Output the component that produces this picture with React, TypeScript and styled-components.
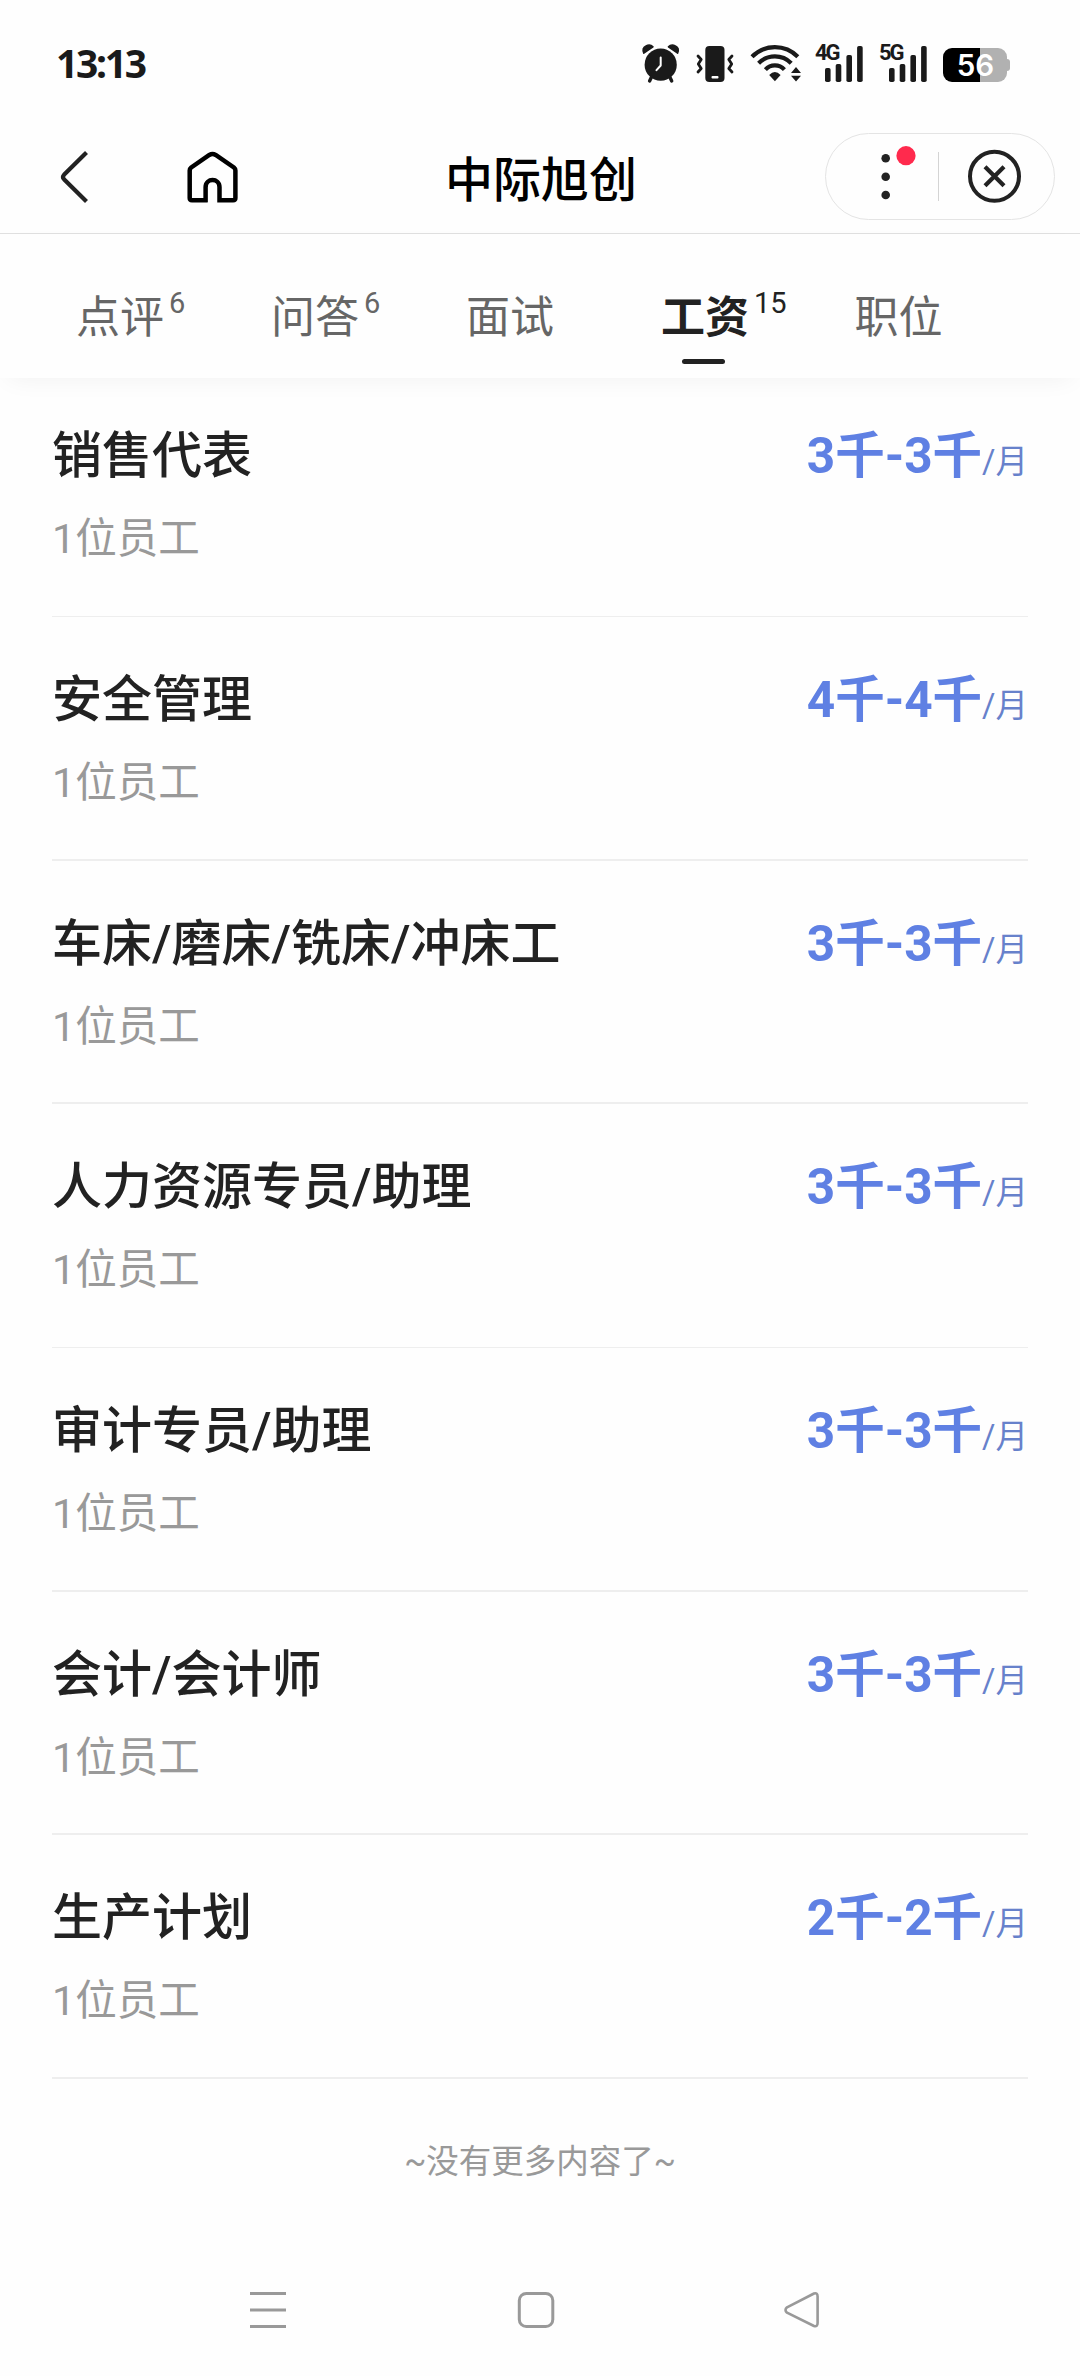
import React from 'react';
import styled, { createGlobalStyle } from 'styled-components';

const GlobalStyle = createGlobalStyle`
  * { box-sizing: border-box; }
  body {
    margin: 0;
    background: #fefefe;
    font-family: Roboto, "Noto Sans CJK SC", sans-serif;
  }
`;

const Screen = styled.div`
  width: 1080px;
  height: 2376px;
  display: flex;
  flex-direction: column;
  background: #fefefe;
  color: #222;
  overflow: hidden;
`;

const StatusBar = styled.header`
  height: 120px;
  flex: none;
  display: flex;
  justify-content: space-between;
  padding: 40px 70px 0 56px;
`;

const Clock = styled.time`
  font: 700 39px/46px "Noto Sans", sans-serif;
  letter-spacing: -2.3px;
  color: #1a1a1a;
`;

const StatusIcons = styled.div`
  display: flex;
  gap: 16px;
  height: 46px;
`;

const Signal = styled.div`
  position: relative;
  width: 48px;
  height: 46px;
`;

const Network = styled.span`
  position: absolute;
  left: 0;
  top: 1px;
  font: 700 22px/24px Roboto, sans-serif;
  letter-spacing: -2px;
  color: #1a1a1a;
`;

const Battery = styled.div`
  display: flex;
  align-items: center;
  height: 34px;
  margin-top: 8px;
`;

const Charge = styled.div<{ $level: number }>`
  width: 64px;
  height: 34px;
  padding-left: 1px;
  border-radius: 9px;
  background: linear-gradient(90deg, #000 ${(p) => p.$level}%, #b1b1b1 ${(p) => p.$level}%);
  color: #fff;
  text-align: center;
  font: 600 29.5px/35px Inter, sans-serif;
`;

const Nub = styled.i`
  width: 3px;
  height: 12px;
  border-radius: 0 3px 3px 0;
  background: #b1b1b1;
`;

const NavBar = styled.nav`
  height: 114px;
  flex: none;
  display: grid;
  grid-template-columns: 256px 1fr 255px;
  align-items: center;
  border-bottom: 1px solid #e0e0e0;
  padding-right: 25px;
`;

const NavActions = styled.div`
  display: flex;
  align-items: center;
  gap: 95px;
  padding-left: 58px;
`;

const PageTitle = styled.h1`
  margin: 8px 0 0 26px;
  text-align: center;
  font-size: 48px;
  line-height: 60px;
  font-weight: 500;
  color: #000;
`;

const Capsule = styled.div`
  width: 230px;
  height: 87px;
  margin-left: 25px;
  border: 1px solid #e4e4e4;
  border-radius: 44px;
  display: flex;
  align-items: center;
`;

const Divider = styled.i`
  width: 1px;
  height: 49px;
  background: #d4d4d4;
`;

const Tabs = styled.div`
  height: 144px;
  flex: none;
  display: flex;
  padding: 36px 0 0 76px;
  box-shadow: 0 8px 24px -8px rgba(0, 0, 0, 0.06);
`;

const Tab = styled.div<{ $active?: boolean }>`
  width: ${(p) => (p.$active ? 193.5 : 195)}px;
  height: 108px;
  display: flex;
  position: relative;
  color: ${(p) => (p.$active ? '#222' : '#666')};
  font-size: 44px;
  line-height: 96px;
  font-weight: ${(p) => (p.$active ? 700 : 400)};

  &::after {
    content: '';
    display: ${(p) => (p.$active ? 'block' : 'none')};
    position: absolute;
    left: 21px;
    top: 89px;
    width: 43px;
    height: 5px;
    border-radius: 3px;
    background: #222;
  }
`;

const Count = styled.sup`
  margin: 12px 0 0 5px;
  font-size: 29px;
  line-height: 42px;
  font-weight: 400;
  vertical-align: top;
`;

const List = styled.ul`
  list-style: none;
  margin: 0;
  padding: 0 52px;
  flex: none;
`;

const Item = styled.li<{ $line: number }>`
  height: 243.7px;
  padding-top: 48px;
  border-bottom: ${(p) => p.$line}px solid #eee;

  &:first-child {
    height: 239px;
    padding-top: 43px;
  }
`;

const ItemHead = styled.div`
  display: flex;
  justify-content: space-between;
  height: 70px;
`;

const JobTitle = styled.h2`
  margin: 0;
  font-size: 50px;
  line-height: 70px;
  font-weight: 500;
  color: #222;
`;

const Salary = styled.div`
  font-size: 49.5px;
  line-height: 70px;
  font-weight: 700;
  color: #5f80e3;
`;

const Unit = styled.span`
  font-size: 32.5px;
  font-weight: 400;
  color: #6781cb;
`;

const Staff = styled.p`
  margin: 19px 0 0;
  font-size: 41.5px;
  line-height: 58px;
  color: #999;
`;

const EndNote = styled.p`
  margin: 60px 0 0;
  text-align: center;
  font-size: 32.5px;
  line-height: 46px;
  color: #999;
`;

const SystemNav = styled.footer`
  margin-top: auto;
  height: 84px;
  display: flex;
  justify-content: space-between;
  padding: 0 259px 0 248px;
`;

const Icon = styled.svg`
  display: block;
  flex: none;
  overflow: visible;
`;

const AlarmIcon = () => (
  <Icon width="38" height="46" viewBox="642 40 38 46">
    <circle cx="660.7" cy="64.7" r="16.1" fill="#1a1a1a" />
    <path d="M643.8 53.2Q641.6 48.2 646 46Q650 43.8 653 46.8ZM677.6 53.2Q679.8 48.2 675.4 46Q671.4 43.8 668.4 46.8Z" fill="#1a1a1a" stroke="#1a1a1a" strokeWidth="1.5" strokeLinejoin="round" />
    <path d="M651.5 77L649.6 81M669.8 77L671.7 81" stroke="#1a1a1a" strokeWidth="3.4" strokeLinecap="round" />
    <path d="M660.7 57.5V65.5L656.5 70.2" fill="none" stroke="#fff" strokeWidth="2" strokeLinecap="round" strokeLinejoin="round" />
  </Icon>
);

const VibrateIcon = () => (
  <Icon width="38" height="46" viewBox="696 40 38 46">
    <rect x="705.3" y="46" width="19.2" height="36" rx="4" fill="#1a1a1a" />
    <rect x="711.5" y="76" width="7" height="2.6" rx="1" fill="#fff" />
    <path d="M698 56L701.2 59.5L698.3 64L701.2 68.5L698 72M732 56L728.8 59.5L731.7 64L728.8 68.5L732 72" fill="none" stroke="#1a1a1a" strokeWidth="2.8" strokeLinecap="round" strokeLinejoin="round" />
  </Icon>
);

const WifiIcon = () => (
  <Icon width="49" height="46" viewBox="750 40 49 46">
    <path d="M752 56.8A32 32 0 0 1 797.8 56.8M758.6 63.2A23 23 0 0 1 791.2 63.2M765.4 69.6A13 13 0 0 1 784.4 69.600" fill="none" stroke="#1a1a1a" strokeWidth="4.2" />
    <path d="M769.2 75Q774.9 69 780.6 75L774.9 81.3Z" fill="#1a1a1a" />
    <path d="M796 67L801 73H791ZM796 81.5L801 75.8H791Z" fill="#1a1a1a" />
  </Icon>
);

const SignalBars = () => (
  <Icon width="48" height="46" viewBox="815 40 48 46">
    {[68, 64, 55, 46].map((top, i) => (
      <rect key={top} x={825 + i * 10.7} y={top} width="5.6" height={82 - top} rx="1.8" fill="#1a1a1a" />
    ))}
  </Icon>
);

const BackIcon = () => (
  <Icon width="34" height="60" viewBox="58 146 34 60">
    <path d="M86.5 151.5L64 173.8Q62 176 64 178.2L86.5 200.5" fill="none" stroke="#222" strokeWidth="4.2" />
  </Icon>
);

const HomeIcon = () => (
  <Icon width="52" height="60" viewBox="187 146 52 60">
    <path d="M207.5 199.2H192Q189.7 199.2 189.7 197V169.5Q189.700 167.700 191.2 166.5L209.3 154Q212.5 152.2 215.7 154L233.9 166.5Q235.4 167.7 235.4 169.5V197Q235.4 199.2 233.1 199.2H219.5V186.3C219.5 176.7 205.6 176.7 205.6 186.3V201.3" fill="none" stroke="#000" strokeWidth="4.5" />
  </Icon>
);

const MoreIcon = () => (
  <Icon width="112" height="85" viewBox="826 134 112 85">
    {[158.3, 176.7, 195].map((y) => (
      <circle key={y} cx="885.7" cy={y} r="4.3" fill="#222" />
    ))}
    <circle cx="906" cy="155.7" r="9.6" fill="#ff2a4d" />
  </Icon>
);

const CloseIcon = () => (
  <Icon width="115" height="85" viewBox="939 134 115 85">
    <circle cx="994.5" cy="176.3" r="24.5" fill="none" stroke="#222" strokeWidth="4" />
    <path d="M985 166.8L1004 185.8M1004 166.8L985 185.8" stroke="#222" strokeWidth="4.2" />
  </Icon>
);

const tabs = [
  { label: '点评', count: 6 },
  { label: '问答', count: 6 },
  { label: '面试' },
  { label: '工资', count: 15, active: true },
  { label: '职位' },
];

const jobs = [
  { title: '销售代表', pay: '3千-3千', line: 1 },
  { title: '安全管理', pay: '4千-4千', line: 2 },
  { title: '车床/磨床/铣床/冲床工', pay: '3千-3千', line: 2 },
  { title: '人力资源专员/助理', pay: '3千-3千', line: 1 },
  { title: '审计专员/助理', pay: '3千-3千', line: 2 },
  { title: '会计/会计师', pay: '3千-3千', line: 2 },
  { title: '生产计划', pay: '2千-2千', line: 2 },
];

export default function App() {
  return (
    <Screen lang="zh-CN">
      <GlobalStyle />
      <StatusBar>
        <Clock>13:13</Clock>
        <StatusIcons>
          <AlarmIcon />
          <VibrateIcon />
          <WifiIcon />
          <Signal>
            <Network>4G</Network>
            <SignalBars />
          </Signal>
          <Signal>
            <Network>5G</Network>
            <SignalBars />
          </Signal>
          <Battery>
            <Charge $level={58}>56</Charge>
            <Nub />
          </Battery>
        </StatusIcons>
      </StatusBar>
      <NavBar>
        <NavActions>
          <BackIcon />
          <HomeIcon />
        </NavActions>
        <PageTitle>中际旭创</PageTitle>
        <Capsule>
          <MoreIcon />
          <Divider />
          <CloseIcon />
        </Capsule>
      </NavBar>
      <Tabs>
        {tabs.map((t) => (
          <Tab key={t.label} $active={t.active}>
            {t.label}
            {t.count && <Count>{t.count}</Count>}
          </Tab>
        ))}
      </Tabs>
      <List>
        {jobs.map((j) => (
          <Item key={j.title} $line={j.line}>
            <ItemHead>
              <JobTitle>{j.title}</JobTitle>
              <Salary>
                {j.pay}
                <Unit>/月</Unit>
              </Salary>
            </ItemHead>
            <Staff>1位员工</Staff>
          </Item>
        ))}
      </List>
      <EndNote>~没有更多内容了~</EndNote>
      <SystemNav>
        <Icon width="40" height="40" viewBox="248 2292 40 40" fill="none" stroke="#999" strokeWidth="3">
          <path d="M250 2293.500H286M250 2310H286M250 2326.500H286" />
        </Icon>
        <Icon width="40" height="40" viewBox="516 2292 40 40" fill="none" stroke="#999" strokeWidth="3">
          <rect x="519.3" y="2293.5" width="33.5" height="33" rx="7" />
        </Icon>
        <Icon width="38" height="40" viewBox="783 2292 38 40" fill="none" stroke="#999" strokeWidth="2.600" strokeLinejoin="round">
          <path d="M814 2293.500L787 2307.300Q784 2310 787 2312.700L814 2326Q817.600 2327 817.600 2323V2296.500Q817.600 2292.500 814 2293.500Z" />
        </Icon>
      </SystemNav>
    </Screen>
  );
}
